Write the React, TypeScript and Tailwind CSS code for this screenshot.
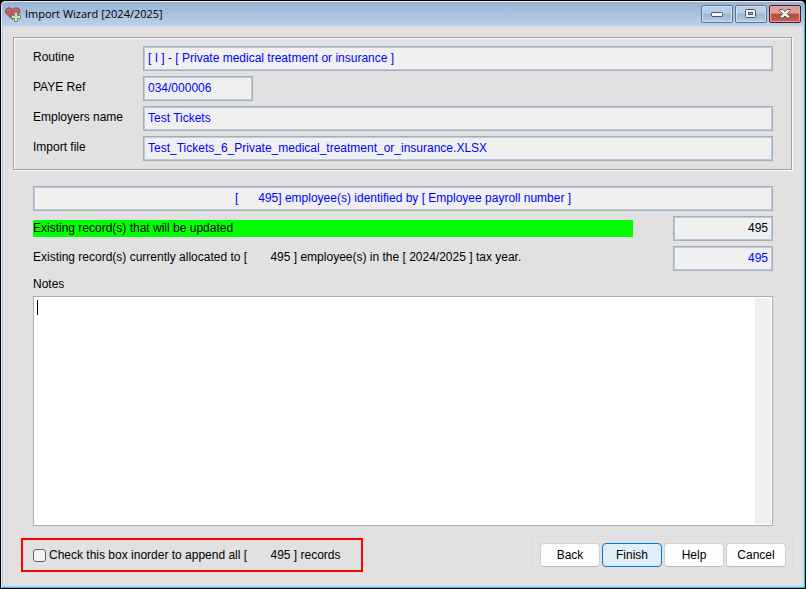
import type { ReactNode } from 'react';

const fieldClass =
  'block h-[25px] border border-[#abadb3] bg-[#f0f0f0] px-1 pb-0.5 text-[12px] shadow-[inset_0_0_0_1px_#b3cce8] outline-none';

const details = [
  { id: 'routine', label: 'Routine', value: '[ I ] - [ Private medical treatment or insurance ]', width: 'w-full' },
  { id: 'paye', label: 'PAYE Ref', value: '034/000006', width: 'w-[110px]' },
  { id: 'employer', label: 'Employers name', value: 'Test Tickets', width: 'w-full' },
  { id: 'file', label: 'Import file', value: 'Test_Tickets_6_Private_medical_treatment_or_insurance.XLSX', width: 'w-full' },
];

function HeartIcon() {
  return (
    <svg width="16" height="15" viewBox="0 0 16 15" aria-hidden="true">
      <path
        d="M7.5 12.5 L1.5 7 Q0 5 .8 3 Q1.5 .8 4 .8 Q6.5 .8 7.5 2.8 Q8.8 .8 11 .8 Q14 .8 14.8 3 Q15.3 5.5 13 8 Z"
        fill="#c4575c"
        stroke="#7a555c"
        strokeWidth="1"
      />
      <path d="M2.5 3.8 Q3.2 2.2 5 2.5 M9.5 2.8 Q11.5 1.8 13 3.2" fill="none" stroke="#dd8f94" strokeWidth="1" />
      <path d="M9.5 5.5h3v3h3v3h-3v3h-3v-3h-3v-3h3z" fill="#dcf3d8" stroke="#6f8a70" strokeWidth="1" />
      <path d="M11 7v6M8 10h6" stroke="#a6d8a0" strokeWidth="1" />
    </svg>
  );
}

function CaptionButton({ label, danger, children }: { label: string; danger?: boolean; children: ReactNode }) {
  const color = danger
    ? 'border-[#4d1c2a] bg-linear-to-b from-[#d99f96] from-45% via-[#bd4936] via-50% to-[#c9644f] shadow-[inset_0_0_0_1px_#dfa39b]'
    : 'border-[#5c7391] bg-linear-to-b from-[#b9cee6] from-45% via-[#98b5d5] via-50% to-[#b8d0ea] shadow-[inset_0_0_0_1px_#d0dfef]';

  return (
    <button
      type="button"
      aria-label={label}
      className={`flex h-[18px] w-8 items-center justify-center rounded-[2px] border ${color}`}
    >
      {children}
    </button>
  );
}

export default function App() {
  return (
    <div className="bg-black font-['Liberation_Sans',Arial,sans-serif] text-[12px] leading-4 text-black">
      <div className="flex min-h-screen flex-col rounded-t-[6px] border border-black bg-[#e1e1e1]">
        <div className="flex flex-1 flex-col rounded-t-[5px] border border-t-[#e5eff9] border-r-[#37c4ea] border-b-[#37c4ea] border-l-[#e5eff9]">
          <header className="flex h-6 items-start justify-between rounded-t-[4px] bg-linear-to-b from-[#98b3d2] to-[#bad1ea] px-[3px]">
            <h1 className="flex items-center gap-1 pt-[3px] font-['Open_Sans','Noto_Sans',sans-serif] text-[11px] leading-[18px]">
              <HeartIcon />
              Import Wizard [2024/2025]
            </h1>
            <div className="flex gap-0.5 pt-[3px]">
              <CaptionButton label="Minimize">
                <svg width="12" height="6" viewBox="0 0 12 6">
                  <rect x=".5" y="1.5" width="11" height="4" rx="1" fill="#f5f5f5" stroke="#4b5363" />
                </svg>
              </CaptionButton>
              <CaptionButton label="Maximize">
                <svg width="12" height="10" viewBox="0 0 12 10">
                  <rect x=".5" y=".5" width="10" height="8" rx="1" fill="#f5f5f5" stroke="#4b5363" />
                  <rect x="3.5" y="3.5" width="4" height="2" fill="#9db8d6" stroke="#4b5363" />
                </svg>
              </CaptionButton>
              <CaptionButton label="Close" danger>
                <svg width="12" height="10" viewBox="0 0 12 10">
                  <path
                    d="M.7 .5H4L6 2.6 8 .5h3.3v1L8.3 4.7l3 3.3v1H8L6 6.9 4 9H.7V8l3-3.3L.7 1.5z"
                    fill="#f7f7f7"
                    stroke="#53505e"
                  />
                </svg>
              </CaptionButton>
            </div>
          </header>

          <main className="flex flex-1 flex-col border-x border-b border-[#b5cdea] px-2.5 pt-[11px] pb-3">
            <section className="mr-px border border-[#a0a0a0] py-2 pr-[18px] pl-[19px] shadow-[1px_1px_0_#fff,inset_1px_1px_0_#fff]">
              <div className="flex flex-col gap-[5px]">
                {details.map((d) => (
                  <div key={d.id} className="flex items-start">
                    <label htmlFor={d.id} className="w-[110px] shrink-0 pt-[3px]">
                      {d.label}
                    </label>
                    <div className="flex-1">
                      <input id={d.id} readOnly value={d.value} className={`${fieldClass} ${d.width} text-[#0000ff]`} />
                    </div>
                  </div>
                ))}
              </div>
            </section>

            <div className="flex flex-1 flex-col px-5 pt-4">
              <input
                aria-label="Employees identified"
                readOnly
                value="[      495] employee(s) identified by [ Employee payroll number ]"
                className={`${fieldClass} w-full text-center text-[#0000ff]`}
              />
              <div className="mt-[5px] flex items-start gap-10">
                <label htmlFor="updated" className="mt-1 h-[17px] flex-1 bg-[#00ff00]">
                  Existing record(s) that will be updated
                </label>
                <input id="updated" readOnly value="495" className={`${fieldClass} w-[100px] text-right`} />
              </div>
              <div className="mt-[5px] flex items-start gap-10">
                <label htmlFor="allocated" className="flex-1 pt-[3px] whitespace-pre">
                  {'Existing record(s) currently allocated to [       495 ] employee(s) in the [ 2024/2025 ] tax year.'}
                </label>
                <input id="allocated" readOnly value="495" className={`${fieldClass} w-[100px] text-right text-[#0000ff]`} />
              </div>
              <label htmlFor="notes" className="mt-[5px] mb-1">
                Notes
              </label>
              <div className="relative flex min-h-[120px] flex-1 border border-[#abadb3] bg-white">
                <textarea id="notes" className="flex-1 resize-none px-1 py-0.5 outline-none" />
                <div className="my-px mr-px w-4 bg-[#f0f0f0]" />
                <span className="absolute top-[3px] left-[3px] h-[15px] w-px bg-black" />
              </div>
            </div>

            <footer className="mt-2.5 flex items-center justify-between pl-2">
              <label className="flex h-[34px] items-center border-2 border-[#ff0000] pr-5 pl-2.5 whitespace-pre">
                <input
                  type="checkbox"
                  className="mr-[3px] size-[13px] appearance-none rounded-[3px] border border-[#626262] bg-[#f3f3f3] checked:bg-[#0067c0]"
                />
                {'Check this box inorder to append all [       495 ] records'}
              </label>
              <div className="flex gap-0.5 border border-[#dcdcdc] py-1.5 pr-1.5 pl-2">
                {['Back', 'Finish', 'Help', 'Cancel'].map((name) => (
                  <button
                    key={name}
                    type="button"
                    className={`h-6 w-[60px] rounded-[4px] border ${
                      name === 'Finish' ? 'border-[#0078d4] bg-[#e0eef9]' : 'border-[#d0d0d0] border-b-[#bababa] bg-[#fdfdfd]'
                    }`}
                  >
                    {name}
                  </button>
                ))}
              </div>
            </footer>
          </main>
        </div>
      </div>
    </div>
  );
}
